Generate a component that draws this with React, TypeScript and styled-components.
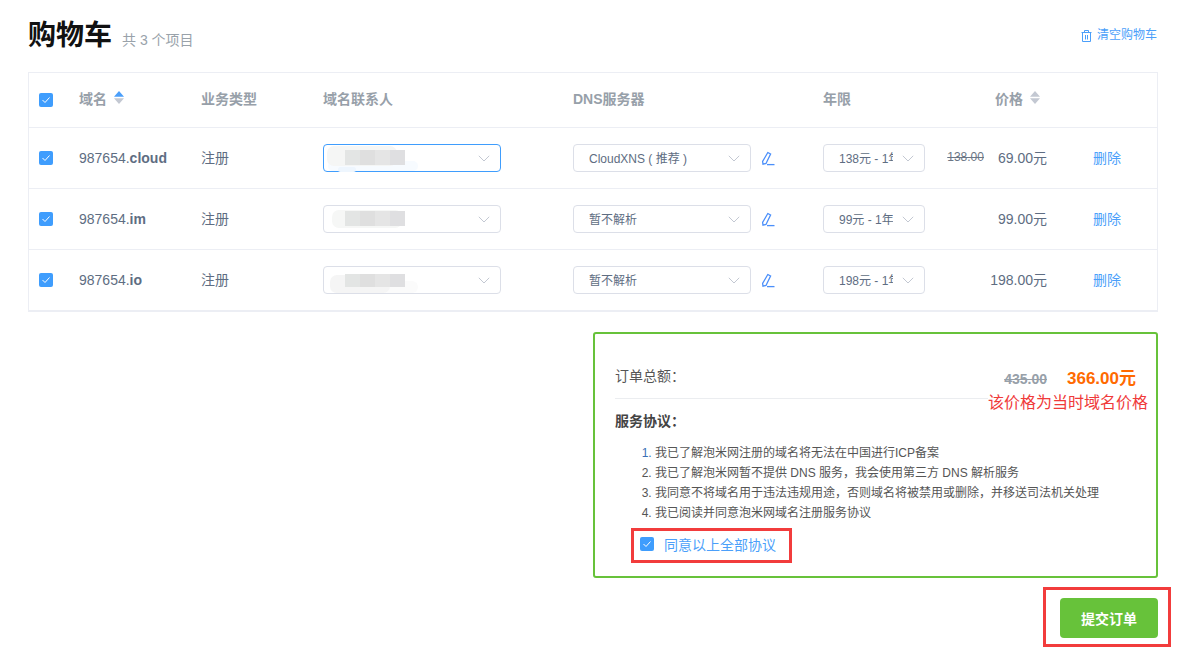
import React from "react";
import styled, { createGlobalStyle } from "styled-components";

const FONT = `"Liberation Sans", "Noto Sans CJK SC", sans-serif`;

const Global = createGlobalStyle`
  html, body { margin: 0; padding: 0; background: #fff; }
  body { font-family: ${FONT}; color: #5e6d82; }
  * { box-sizing: border-box; }
`;

const Page = styled.div`
  width: 1203px;
  height: 663px;
  padding: 0 45px 0 28px;
  overflow: hidden;
`;

const Head = styled.div`
  height: 72px;
  display: flex;
  align-items: flex-start;
  justify-content: space-between;
`;
const TitleWrap = styled.div`
  display: flex;
  align-items: center;
  gap: 10px;
  padding-top: 18px;
`;
const Title = styled.h1`
  margin: 0;
  font-size: 28px;
  line-height: 36px;
  font-weight: 700;
  color: #111;
`;
const Count = styled.span`
  padding-top: 6px;
  font-size: 14px;
  color: #99a2aa;
`;
const ClearLink = styled.a`
  display: flex;
  align-items: center;
  gap: 5px;
  margin: 27px 1px 0 0;
  font-size: 12px;
  line-height: 17px;
  color: #4b9ffa;
`;

const Table = styled.div`
  width: 1130px;
  border: 1px solid #eceef4;
  border-bottom: 2px solid #eceef4;
`;
const Row = styled.div<{ $head?: boolean }>`
  display: grid;
  grid-template-columns: 50px 122px 122px 250px 250px 113px 1fr 110px;
  align-items: center;
  height: ${(p) => (p.$head ? 55 : 61)}px;
  border-bottom: 1px solid #eceef4;
  &:last-child { border-bottom: none; height: 60px; }
`;
const CheckCell = styled.div`
  padding-left: 10px;
  display: flex;
  align-items: center;
`;
const Box = styled.span`
  width: 14px;
  height: 14px;
  border-radius: 2px;
  background: #3f9dfd;
  display: inline-flex;
  align-items: center;
  justify-content: center;
  flex: none;
`;
const HeadCell = styled.div`
  display: flex;
  align-items: center;
  gap: 7px;
  padding-bottom: 5px;
  font-size: 14px;
  font-weight: 700;
  color: #97a0a9;
`;
const PriceHead = styled(HeadCell)`
  justify-content: flex-end;
  padding-right: 7px;
`;
const Domain = styled.div`
  font-size: 14px;
  color: #5e6d82;
  b { font-weight: 700; }
`;
const Plain = styled.div`
  padding-bottom: 3px;
  font-size: 14px;
  color: #5e6d82;
`;
const SelectLine = styled.div`
  display: flex;
  align-items: center;
  gap: 10px;
`;
const Select = styled.div<{ $w: number; $focus?: boolean; $pad?: number }>`
  position: relative;
  width: ${(p) => p.$w}px;
  height: 28px;
  border: 1px solid ${(p) => (p.$focus ? "#3f9dfd" : "#dcdfe8")};
  border-radius: 4px;
  padding: 0 ${(p) => p.$pad ?? 30}px 2px 15px;
  display: flex;
  align-items: center;
  font-size: 12px;
  color: #5e6d82;
  background: #fff;
`;
const SelectText = styled.span`
  white-space: nowrap;
  overflow: hidden;
`;
const Chevron = styled.svg`
  position: absolute;
  right: 10px;
  top: 10px;
`;
const Mosaic = styled.div<{ $short?: boolean }>`
  position: absolute;
  left: 21px;
  top: ${(p) => (p.$short ? 7 : 5)}px;
  display: flex;
`;
const Tile = styled.span<{ $c: string; $short?: boolean }>`
  width: 15px;
  height: ${(p) => (p.$short ? 13 : 15)}px;
  background: ${(p) => p.$c};
`;
const Smear = styled.div<{ $l: number; $w: number; $t: number; $h: number; $c: string }>`
  position: absolute;
  left: ${(p) => p.$l}px;
  width: ${(p) => p.$w}px;
  top: ${(p) => p.$t}px;
  height: ${(p) => p.$h}px;
  background: ${(p) => p.$c};
  border-radius: 7px;
`;
const PriceCell = styled.div`
  display: flex;
  justify-content: flex-end;
  align-items: center;
  gap: 14px;
  padding-bottom: 3px;
  font-size: 14px;
  color: #5e6d82;
`;
const OldPrice = styled.s`
  font-size: 12px;
  color: #6b7686;
`;
const Del = styled.a`
  padding: 0 0 2px 46px;
  font-size: 14px;
  color: #4b9ffa;
`;

const Summary = styled.div`
  display: flex;
  flex-direction: column;
  align-items: flex-end;
  width: 1130px;
  padding-top: 20px;
`;
const Panel = styled.div`
  position: relative;
  width: 565px;
  height: 246px;
  border: 2px solid #67c23a;
  border-radius: 3px;
  padding: 0 20px;
`;
const TotalRow = styled.div`
  height: 65px;
  border-bottom: 1px solid #ebedf0;
  display: flex;
  justify-content: space-between;
  align-items: center;
  padding: 18px 0 0;
  font-size: 14px;
  color: #555;
`;
const Amounts = styled.div`
  display: flex;
  align-items: baseline;
  gap: 20px;
  padding-top: 3px;
`;
const OldTotal = styled.s`
  font-size: 14px;
  font-weight: 700;
  color: #97a0a9;
`;
const NewTotal = styled.span`
  font-size: 17px;
  font-weight: 700;
  color: #ff6a00;
`;
const Note = styled.div`
  position: absolute;
  right: 8px;
  top: 58px;
  font-size: 16px;
  line-height: 21px;
  color: #f03a3a;
  background: #fff;
`;
const TermsTitle = styled.div`
  margin-top: 13px;
  font-size: 14px;
  line-height: 18px;
  font-weight: 700;
  color: #444;
`;
const Terms = styled.ol`
  margin: 13px 0 0;
  padding: 0 0 0 40px;
  font-size: 12px;
  line-height: 20px;
  color: #555;
  li:first-child::marker { color: #3b6fb5; }
`;
const Agree = styled.div`
  position: relative;
  width: 161px;
  height: 35px;
  margin: 5px 0 0 16px;
  border: 3px solid #f23c3c;
  display: flex;
  align-items: center;
  gap: 10px;
  padding: 0 0 3px 6px;
  font-size: 14px;
  color: #4b9ffa;
`;
const SubmitFrame = styled.div`
  width: 128px;
  height: 60px;
  margin: 9px -13px 0 0;
  border: 3px solid #f23c3c;
  display: flex;
  align-items: center;
  justify-content: flex-end;
  padding: 2px 10px 0 0;
`;
const Submit = styled.button`
  width: 98px;
  height: 40px;
  border: none;
  border-radius: 4px;
  background: #67c23a;
  color: #fff;
  font: 700 14px ${FONT};
`;

const Check = () => (
  <Box>
    <svg width="10" height="8" viewBox="0 0 10 8" fill="none">
      <path d="M1.5 4 L4 6.5 L8.5 1.5" stroke="#fff" strokeWidth="1" />
    </svg>
  </Box>
);
const Sort = ({ up }: { up: string }) => (
  <svg width="10" height="13" viewBox="0 0 10 13">
    <path d="M5 0 L10 5.8 H0 Z" fill={up} />
    <path d="M5 13 L10 7.2 H0 Z" fill="#c3c8d2" />
  </svg>
);
const Down = () => (
  <Chevron width="12" height="7" viewBox="0 0 12 7" fill="none">
    <path d="M0.8 0.8 L6 6 L11.2 0.8" stroke="#c3c8d2" strokeWidth="1" />
  </Chevron>
);
const Pencil = () => (
  <svg width="14" height="15" viewBox="0 0 14 15" fill="none" stroke="#4b8ffa" strokeWidth="1.3">
    <path d="M6.8 1.5 L9.6 3 L5 12.5 L2 13.2 L1.6 10.5 Z" />
    <path d="M6 13.6 H13.5" />
  </svg>
);
const Trash = () => (
  <svg width="11" height="12" viewBox="0 0 11 12" fill="none" stroke="#4b9ffa" strokeWidth="1">
    <path d="M0.5 2.5 H10.5 M3.5 2.5 V0.5 H7.5 V2.5 M1.5 2.5 V11.5 H9.5 V2.5 M4.5 5 V9.5 M6.5 5 V9.5" />
  </svg>
);

type Blob = { l: number; w: number; t: number; h: number; c: string };
type Item = {
  name: string;
  tld: string;
  dns: string;
  year: string;
  old?: string;
  price: string;
  smears: Blob[];
  focus?: boolean;
  short?: boolean;
};

const items: Item[] = [
  {
    name: "987654.",
    tld: "cloud",
    dns: "CloudXNS ( 推荐 )",
    year: "138元 - 1年",
    old: "138.00",
    price: "69.00元",
    focus: true,
    smears: [
      { l: 4, w: 90, t: 16, h: 10, c: "#f7fbff" },
      { l: 14, w: 18, t: 22, h: 5, c: "#eef6fe" },
      { l: 3, w: 70, t: 1, h: 20, c: "#f5f6f5" },
    ],
  },
  {
    name: "987654.",
    tld: "im",
    dns: "暂不解析",
    year: "99元 - 1年",
    price: "99.00元",
    smears: [{ l: 8, w: 70, t: 4, h: 18, c: "#f6f7f6" }],
  },
  {
    name: "987654.",
    tld: "io",
    dns: "暂不解析",
    year: "198元 - 1年",
    price: "198.00元",
    short: true,
    smears: [
      { l: 6, w: 88, t: 14, h: 12, c: "#fbfbfb" },
      { l: 6, w: 60, t: 8, h: 18, c: "#f5f5f5" },
    ],
  },
];

const TILES = ["#e3e5e4", "#dfdfdf", "#e5e5e5", "#dfdfe1"];

const terms = [
  "我已了解泡米网注册的域名将无法在中国进行ICP备案",
  "我已了解泡米网暂不提供 DNS 服务，我会使用第三方 DNS 解析服务",
  "我同意不将域名用于违法违规用途，否则域名将被禁用或删除，并移送司法机关处理",
  "我已阅读并同意泡米网域名注册服务协议",
];

export default function App() {
  return (
    <Page>
      <Global />
      <Head>
        <TitleWrap>
          <Title>购物车</Title>
          <Count>共 3 个项目</Count>
        </TitleWrap>
        <ClearLink>
          <Trash />
          清空购物车
        </ClearLink>
      </Head>
      <Table>
        <Row $head>
          <CheckCell>
            <Check />
          </CheckCell>
          <HeadCell>
            域名 <Sort up="#4b9ffa" />
          </HeadCell>
          <HeadCell>业务类型</HeadCell>
          <HeadCell>域名联系人</HeadCell>
          <HeadCell>DNS服务器</HeadCell>
          <HeadCell>年限</HeadCell>
          <PriceHead>
            价格 <Sort up="#c3c8d2" />
          </PriceHead>
          <div />
        </Row>
        {items.map((it) => (
          <Row key={it.tld}>
            <CheckCell>
              <Check />
            </CheckCell>
            <Domain>
              {it.name}
              <b>{it.tld}</b>
            </Domain>
            <Plain>注册</Plain>
            <div>
              <Select $w={178} $focus={it.focus}>
                {it.smears.map((s, i) => (
                  <Smear key={i} $l={s.l} $w={s.w} $t={s.t} $h={s.h} $c={s.c} />
                ))}
                <Mosaic $short={it.short}>
                  {TILES.map((c, i) => (
                    <Tile key={i} $c={c} $short={it.short} />
                  ))}
                </Mosaic>
                <Down />
              </Select>
            </div>
            <SelectLine>
              <Select $w={178}>
                <SelectText>{it.dns}</SelectText>
                <Down />
              </Select>
              <Pencil />
            </SelectLine>
            <div>
              <Select $w={102} $pad={31}>
                <SelectText>{it.year}</SelectText>
                <Down />
              </Select>
            </div>
            <PriceCell>
              {it.old && <OldPrice>{it.old}</OldPrice>}
              {it.price}
            </PriceCell>
            <Del>删除</Del>
          </Row>
        ))}
      </Table>
      <Summary>
        <Panel>
          <TotalRow>
            <span>订单总额：</span>
            <Amounts>
              <OldTotal>435.00</OldTotal>
              <NewTotal>366.00元</NewTotal>
            </Amounts>
          </TotalRow>
          <Note>该价格为当时域名价格</Note>
          <TermsTitle>服务协议：</TermsTitle>
          <Terms>
            {terms.map((t) => (
              <li key={t}>{t}</li>
            ))}
          </Terms>
          <Agree>
            <Check />
            同意以上全部协议
          </Agree>
        </Panel>
        <SubmitFrame>
          <Submit>提交订单</Submit>
        </SubmitFrame>
      </Summary>
    </Page>
  );
}
